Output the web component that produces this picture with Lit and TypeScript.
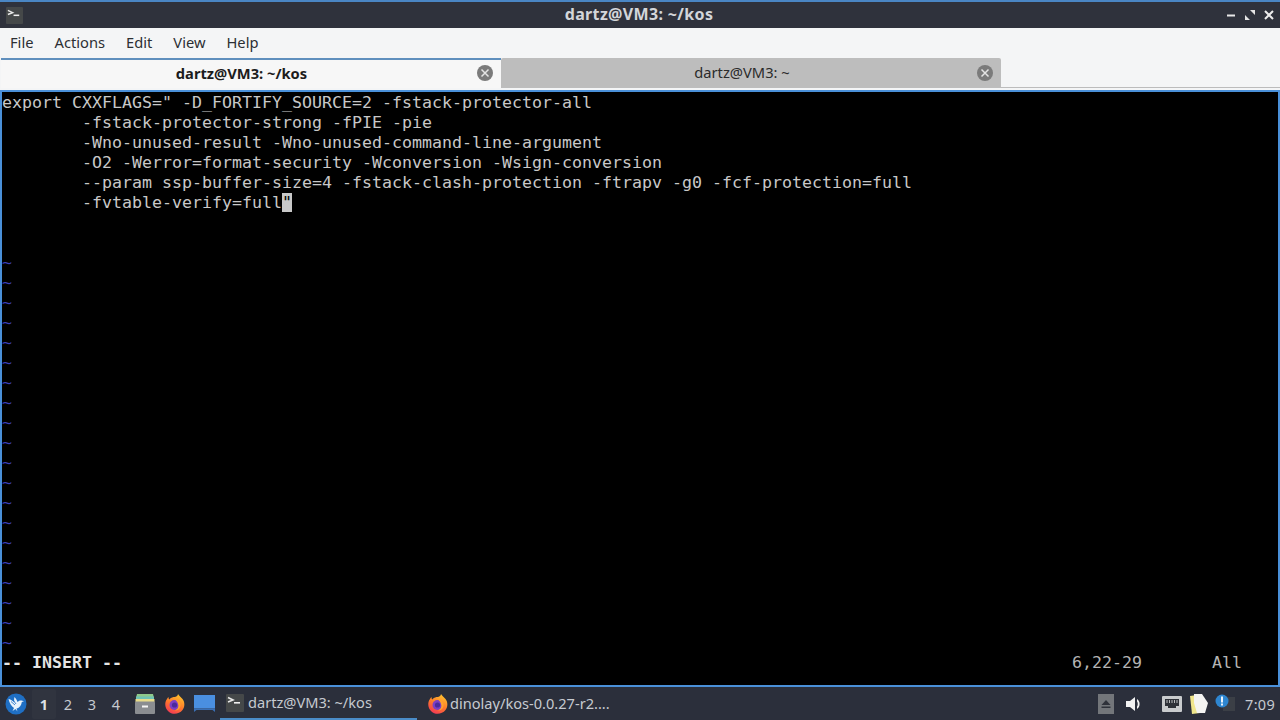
import { LitElement, html, css } from "lit";
import { customElement } from "lit/decorators.js";

const LINES = [
  'export CXXFLAGS=" -D_FORTIFY_SOURCE=2 -fstack-protector-all',
  "        -fstack-protector-strong -fPIE -pie",
  "        -Wno-unused-result -Wno-unused-command-line-argument",
  "        -O2 -Werror=format-security -Wconversion -Wsign-conversion",
  "        --param ssp-buffer-size=4 -fstack-clash-protection -ftrapv -g0 -fcf-protection=full",
];

const termIcon = (s: number) => html`<svg width=${s} height=${s} viewBox="0 0 18 18">
  <rect width="18" height="18" rx="1" fill="#454849"/>
  <path d="M2 3.5 L7 6 L2 8" fill="none" stroke="#e8e8e8" stroke-width="1.6"/>
  <rect x="8" y="8" width="6" height="1.6" fill="#f0f0f0"/>
</svg>`;

const firefox = (id: string) => html`<svg width="22" height="22" viewBox="0 0 22 22">
  <defs>
    <linearGradient id=${id} x1="0.7" y1="0" x2="0.2" y2="1">
      <stop offset="0" stop-color="#ffc52e"/>
      <stop offset="0.5" stop-color="#ff7a2a"/>
      <stop offset="1" stop-color="#f0325a"/>
    </linearGradient>
  </defs>
  <path d="M14 1 C15 3 17 4 18.5 6 C21 9 21 14 18.5 17 C15 21.5 8 22 4.5 18.5 C0.5 15 0.5 9 3 6 C3.5 5 4 4.4 4.6 4 C4.5 5 4.7 6 5.3 6.6 C6.5 4.6 9.5 4 11 4 C12.5 3.5 14 2.5 14 1 Z" fill="url(#${id})"/>
  <circle cx="10.5" cy="12" r="5" fill="#7c3fc4"/>
  <circle cx="10.5" cy="12" r="2.6" fill="#4b2a9c"/>
  <path d="M11 6.5 C14.5 6.5 17 9 16.5 13 C16 16 13.5 17.5 11 17.5 C14 16 15 13.5 14 11 C13.4 9 12.5 7.6 11 6.5 Z" fill="#ffa12e"/>
</svg>`;

@customElement("app-root")
export class AppRoot extends LitElement {
  static styles = css`
    :host {
      display: flex;
      flex-direction: column;
      width: 1280px;
      height: 720px;
      overflow: hidden;
      font-family: "Noto Sans", "Open Sans", sans-serif;
      background: #f5f6f7;
    }
    .edge { height: 2px; background: #4a86c4; flex: none; }
    .title {
      height: 26px; flex: none; background: #2f323c; color: #d3d6da;
      display: grid; grid-template-columns: 1fr auto 1fr; align-items: center;
      font-size: 16px; font-weight: 700; padding: 0 6px 0 6px;
    }
    .title .left { display: flex; }
    .title .name { letter-spacing: 0.34px; margin-left: -2px; line-height: 24px; padding-bottom: 2px; }
    .winbtns { display: flex; justify-content: flex-end; gap: 9px; align-items: center; }
    .menu {
      height: 30px; flex: none; display: flex; align-items: center; gap: 21px;
      padding: 0 10px 2px; box-sizing: border-box; font-size: 14.7px; color: #2c2f33; background: #f4f5f6;
    }
    .tabs { height: 32px; flex: none; display: flex; background: #f4f5f6; padding-left: 1px; align-items: flex-start; }
    .tab {
      width: 500px; height: 30px; position: relative; display: flex; align-items: center; justify-content: center;
      font-size: 14.7px; color: #2b2b2b; box-sizing: border-box; padding: 0 19px 2px 0;
    }
    .tab.on { background: #f7f7f7; border-top: 2px solid #5f8fbd; font-weight: 700; color: #1c1c1c; }
    .tab.off { background: #bdbdbd; border-radius: 2px 2px 0 0; padding-right: 18px; }
    .fill { flex: 1; height: 30px; box-sizing: border-box; border-bottom: 1px solid #bcbcbc; }
    .x { position: absolute; right: 8px; top: 7px; }
    .tab.on .x { top: 5px; }
    .term {
      height: 597px; flex: none; box-sizing: border-box; background: #000;
      border: 2px solid #4a90d9; padding-top: 1px;
      overflow: hidden; color: #c8c8c8;
      font-family: "DejaVu Sans Mono", monospace; font-size: 16.61px;
    }
    .row { height: 20px; line-height: 20px; white-space: pre; }
    .tilde { color: #3a3fb8; }
    .status { font-weight: 700; color: #e4e4e4; }
    .pos { font-weight: 400; color: #b4b4b4; }
    .cursor { background: #c8c8c8; color: #000; }
    .bar {
      height: 33px; flex: none; background: #2b2f3b; display: flex; align-items: center;
      color: #c6cad0; font-size: 14.6px; padding-left: 5px; box-sizing: border-box;
    }
    .logo { width: 22px; height: 22px; flex: none; }
    .ws { display: flex; margin-left: 5px; }
    .ws span { width: 24px; height: 30px; display: flex; align-items: center; justify-content: center; font-size: 14.5px; }
    .ws .cur { background: #30343f; color: #dfe1e5; font-weight: 700; border-radius: 2px; }
    .launch { display: flex; align-items: center; gap: 8px; margin-left: 6px; width: 86px; flex: none; }
    .task { display: flex; align-items: center; height: 33px; box-sizing: border-box; flex: none; }
    .task.t1 { width: 197px; padding-left: 6px; border-bottom: 2px solid #4a8cc8; gap: 4px; }
    .task.t2 { padding-left: 10px; gap: 1px; }
    .task span { position: relative; top: -1px; }
    .tray { margin-left: auto; display: flex; align-items: center; padding-right: 5px; }
    .clock { font-size: 14.5px; margin-left: 10px; letter-spacing: 0.3px; }
    .t-box { margin-right: 12px; }
    .t-vol { margin-right: 18px; }
    .t-net { margin-right: 7px; }
    .t-note { margin-right: 6px; }
  `;

  render() {
    const tildes = Array.from({ length: 20 });
    return html`
      <div class="edge"></div>
      <div class="title">
        <div class="left">${termIcon(17)}</div>
        <div class="name">dartz@VM3: ~/kos</div>
        <div class="winbtns">
          <svg width="9" height="9" viewBox="0 0 9 9"><rect x="0" y="3.5" width="8" height="2" fill="#e8e8e8"/></svg>
          <svg width="10" height="10" viewBox="0 0 10 10"><path d="M5 0 H10 V5 Z M0 5 L5 10 H0 Z" fill="#e4e4e4"/></svg>
          <svg width="10" height="10" viewBox="0 0 10 10"><path d="M1 1 L9 9 M9 1 L1 9" stroke="#ececec" stroke-width="2"/></svg>
        </div>
      </div>
      <div class="menu"><span>File</span><span>Actions</span><span>Edit</span><span>View</span><span>Help</span></div>
      <div class="tabs">
        <div class="tab on">dartz@VM3: ~/kos${this.closeBtn()}</div>
        <div class="tab off">dartz@VM3: ~${this.closeBtn()}</div>
        <div class="fill"></div>
      </div>
      <div class="term">
        ${LINES.map((l) => html`<div class="row">${l}</div>`)}
        <div class="row">        -fvtable-verify=full<span class="cursor">"</span></div>
        <div class="row"></div>
        <div class="row"></div>
        ${tildes.map(() => html`<div class="row tilde">~</div>`)}
        <div class="row status">-- INSERT --<span class="pos">${" ".repeat(95)}6,22-29${" ".repeat(7)}All</span></div>
      </div>
      <div class="bar">
        <svg class="logo" viewBox="0 0 22 22">
          <circle cx="11" cy="11" r="10.5" fill="#1f6fc4"/>
          <path d="M3.5 6 C6 6.5 8 8 9.5 9.5 C9 7.5 9 5.5 9.5 4 C11 5.5 12 7.5 12.5 9 C13.5 7.8 15 7.2 16.5 7.5 L19 8.2 L16.8 9 C16.5 12 14.5 15 11.5 15.5 L12.5 18.5 L10.5 16 L7.5 18 L9 15 C6.5 13.5 4.5 10 3.5 6 Z" fill="#e9f2fb"/>
          <path d="M6 8.5 L10 12 M8 7 L11 11" stroke="#1f6fc4" stroke-width="0.8"/>
        </svg>
        <div class="ws"><span class="cur">1</span><span>2</span><span>3</span><span>4</span></div>
        <div class="launch">
          <svg width="22" height="22" viewBox="0 0 22 22">
            <path d="M3 1 H19 L20 5 H2 Z" fill="#8fc98a"/>
            <rect x="2" y="3.5" width="18" height="3" fill="#6fc3b5"/>
            <rect x="1.5" y="6" width="19" height="3" fill="#e9dc8a"/>
            <rect x="1" y="8.5" width="20" height="12.5" rx="1" fill="#8a8d91"/>
            <rect x="8" y="12.5" width="6" height="2" fill="#f5f5f5"/>
          </svg>
          ${firefox("ff1")}
          <svg width="21" height="17" viewBox="0 0 21 17">
            <rect x="0" y="0" width="21" height="13.5" fill="#4a8fe0"/>
            <path d="M0 13.5 H21 V17 L18.5 15 H2.5 L0 17 Z" fill="#3a6fb4"/>
          </svg>
        </div>
        <div class="task t1">${termIcon(18)}<span>dartz@VM3: ~/kos</span></div>
        <div class="task t2">${firefox("ff2")}<span>dinolay/kos-0.0.27-r2....</span></div>
        <div class="tray">
          <svg class="t-box" width="16" height="20" viewBox="0 0 16 20">
            <rect width="16" height="20" fill="#73767a"/>
            <path d="M8 6 L12.5 11 H3.5 Z" fill="#2f323a"/>
            <rect x="3.5" y="12.5" width="9" height="1.5" fill="#2f323a"/>
          </svg>
          <svg class="t-vol" width="18" height="16" viewBox="0 0 18 16">
            <path d="M0 5 H4 L9 1 V15 L4 11 H0 Z" fill="#f2f2f2"/>
            <path d="M11 3 C14.5 5 14.5 11 11 13 L11 10.5 C12 9.5 12 6.5 11 5.5 Z" fill="#f2f2f2"/>
          </svg>
          <svg class="t-net" width="20" height="16" viewBox="0 0 20 16">
            <rect width="20" height="16" rx="1" fill="#c9cbcd"/>
            <path d="M3 3 H17 V10 H14 V12 H6 V10 H3 Z" fill="#2e3138"/>
            <path d="M5 4 V7 M7.5 4 V7 M10 4 V7 M12.5 4 V7 M15 4 V7" stroke="#c9cbcd" stroke-width="0.9"/>
          </svg>
          <svg class="t-note" width="20" height="22" viewBox="0 0 20 22">
            <path d="M1 3 L3 21 L11 20 L8 2 Z" fill="#f0e68c"/>
            <path d="M5 1 H13 L19 10 L16 20 L8 20 L5 10 Z" fill="#f4f4f2"/>
          </svg>
          <svg width="20" height="20" viewBox="0 0 20 20">
            <rect x="8" y="3" width="12" height="14" fill="#3b3f46"/>
            <circle cx="7" cy="7" r="6.5" fill="#2e86d0"/>
            <rect x="6" y="2.5" width="2" height="6" fill="#eaf3fb"/>
            <rect x="6" y="9.5" width="2" height="2" fill="#eaf3fb"/>
          </svg>
          <span class="clock">7:09</span>
        </div>
      </div>
    `;
  }

  closeBtn() {
    return html`<svg class="x" width="16" height="16" viewBox="0 0 16 16">
      <circle cx="8" cy="8" r="8" fill="#7b7b7b"/>
      <path d="M4.5 4.5 L11.5 11.5 M11.5 4.5 L4.5 11.5" stroke="#e4e4e4" stroke-width="1.5"/>
    </svg>`;
  }
}
